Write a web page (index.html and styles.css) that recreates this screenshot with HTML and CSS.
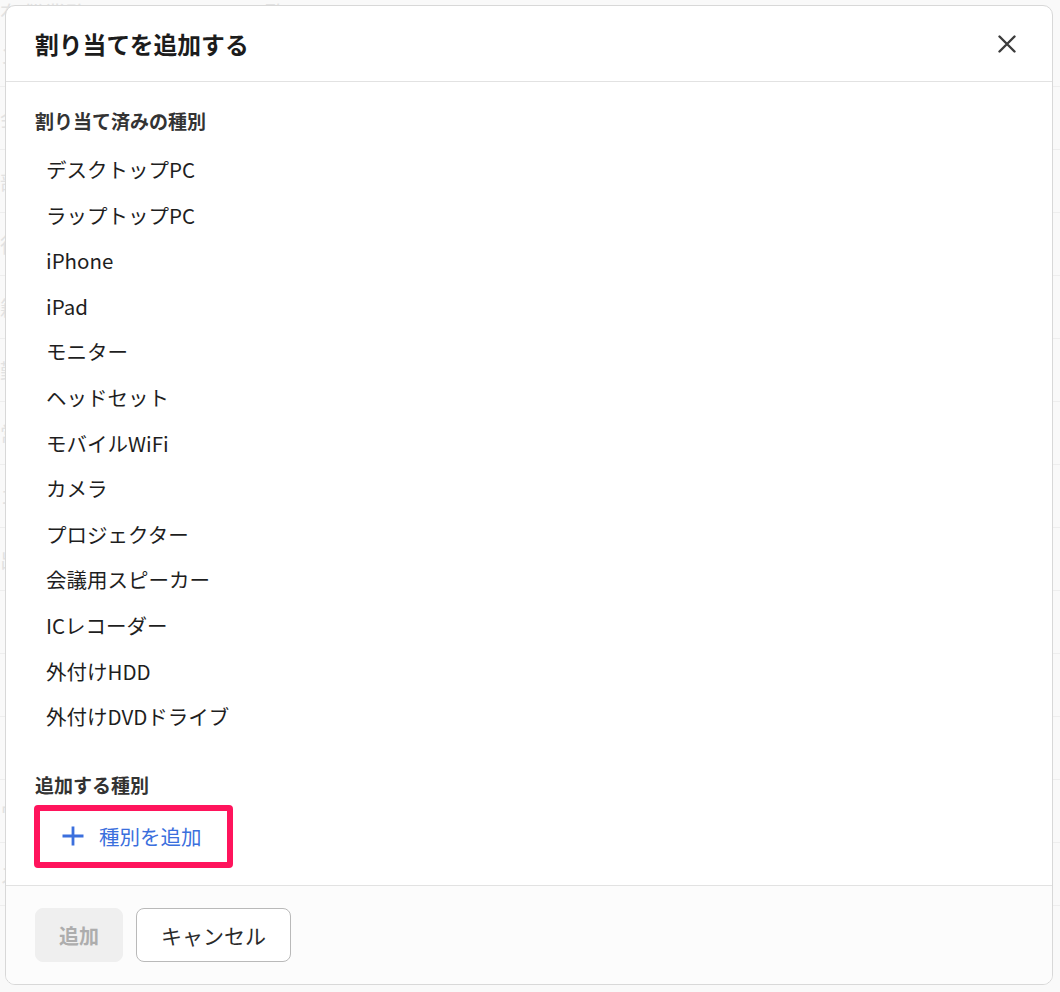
FILE: index.html
```html
<!DOCTYPE html>
<html lang="ja">
<head>
<meta charset="utf-8">
<title>割り当てを追加する</title>
<link rel="stylesheet" href="styles.css">
</head>
<body>
<div class="page">
  <div class="page-title">有償業務メールアドレス一覧</div>
  <div class="page-row">ン</div>
  <div class="page-row">会</div>
  <div class="page-row">部</div>
  <div class="page-row">役</div>
  <div class="page-row">籍</div>
  <div class="page-row">勤</div>
  <div class="page-row">常</div>
  <div class="page-row">コ</div>
  <div class="page-row">出</div>
  <div class="page-row">〈</div>
  <div class="page-row">〈</div>
  <div class="page-row">〈</div>
  <div class="page-row">ウ</div>
  <div class="page-row">ス</div>
</div>

<div class="modal" role="dialog" aria-labelledby="modal-title">
  <header class="modal-header">
    <h1 class="modal-title" id="modal-title">割り当てを追加する</h1>
    <button class="close-btn" aria-label="閉じる">
      <svg width="18" height="18" viewBox="0 0 18 18" aria-hidden="true">
        <path d="M1.5 1.5 L16.5 16.5 M16.5 1.5 L1.5 16.5" stroke="#3c3c3c" stroke-width="2.4" stroke-linecap="round" fill="none"/>
      </svg>
    </button>
  </header>

  <div class="modal-body">
    <h2 class="section-label">割り当て済みの種別</h2>
    <ul class="type-list">
      <li>デスクトップPC</li>
      <li>ラップトップPC</li>
      <li>iPhone</li>
      <li>iPad</li>
      <li>モニター</li>
      <li>ヘッドセット</li>
      <li>モバイルWiFi</li>
      <li>カメラ</li>
      <li>プロジェクター</li>
      <li>会議用スピーカー</li>
      <li>ICレコーダー</li>
      <li>外付けHDD</li>
      <li>外付けDVDドライブ</li>
    </ul>

    <h2 class="section-label section-label-add">追加する種別</h2>
    <div class="highlight">
      <button class="add-type-btn">
        <svg class="plus" width="22" height="20" viewBox="0 0 22 20" aria-hidden="true">
          <path d="M11 0.5 V19.5 M0.5 10 H21.5" stroke="#3b6fdd" stroke-width="2.8" fill="none"/>
        </svg>
        <span>種別を追加</span>
      </button>
    </div>
  </div>

  <footer class="modal-footer">
    <button class="btn btn-primary" disabled>追加</button>
    <button class="btn btn-secondary">キャンセル</button>
  </footer>
</div>
</body>
</html>
```

FILE: styles.css
```css
* {
  box-sizing: border-box;
}

html, body {
  margin: 0;
  padding: 0;
}

body {
  width: 1060px;
  height: 992px;
  overflow: hidden;
  background: #f9f9f9;
  font-family: "Noto Sans CJK JP", "Noto Sans", sans-serif;
  color: #222;
  position: relative;
}

/* faint page behind the dialog */
.page {
  color: #e2e2e2;
  font-size: 20px;
}

.page-title {
  line-height: 24px;
  height: 24px;
  font-size: 22px;
  white-space: nowrap;
}

.page-row {
  height: 63px;
  line-height: 63px;
  border-bottom: 1px solid #eeeeee;
}

/* dialog */
.modal {
  position: absolute;
  left: 5px;
  top: 5px;
  width: 1048px;
  height: 980px;
  background: #ffffff;
  border: 1px solid #d8d8d8;
  border-radius: 10px;
  display: flex;
  flex-direction: column;
  overflow: hidden;
}

.modal-header {
  height: 76px;
  flex: none;
  display: flex;
  align-items: center;
  justify-content: space-between;
  padding: 0 36px 0 29px;
  border-bottom: 1px solid #e2e2e2;
}

.modal-title {
  margin: 0;
  font-size: 23.8px;
  font-weight: 700;
  color: #1c1c1c;
  line-height: 32px;
}

.close-btn {
  border: none;
  background: transparent;
  padding: 0;
  width: 18px;
  height: 18px;
  display: flex;
  cursor: pointer;
}

.modal-body {
  flex: 1;
  padding: 27px 29px 0 29px;
  display: flex;
  flex-direction: column;
  align-items: flex-start;
}

.section-label {
  margin: 0;
  font-size: 19px;
  font-weight: 700;
  color: #333;
  line-height: 24px;
}

.type-list {
  list-style: none;
  margin: 14px 0 0 0;
  padding: 0 0 0 11px;
}

.type-list li {
  font-size: 20.5px;
  line-height: 45.6px;
  height: 45.6px;
  color: #1e1e1e;
}

.section-label-add {
  margin-top: 33px;
}

.highlight {
  margin-top: 8px;
  margin-left: -1px;
  border: 6px solid #ff145c;
  border-radius: 4px;
  width: 199px;
  height: 63px;
  display: flex;
  align-items: center;
}

.add-type-btn {
  border: none;
  background: transparent;
  font-family: inherit;
  font-size: 20.5px;
  color: #3b6fdd;
  display: flex;
  align-items: center;
  gap: 15px;
  padding: 0 0 0 22px;
  white-space: nowrap;
  cursor: pointer;
}

.plus {
  flex: none;
}

.modal-footer {
  flex: none;
  height: 99px;
  border-top: 1px solid #e2e2e2;
  background: #fcfcfc;
  display: flex;
  align-items: center;
  gap: 13px;
  padding: 0 29px 0 29px;
}

.btn {
  height: 54px;
  border-radius: 8px;
  font-family: inherit;
  font-size: 20px;
  padding: 0 23px;
  display: flex;
  align-items: center;
  justify-content: center;
  white-space: nowrap;
}

.btn-primary {
  background: #efefef;
  border: 1px solid #efefef;
  color: #adadad;
  font-weight: 700;
}

.btn-secondary {
  background: #ffffff;
  border: 1px solid #b9b9b9;
  color: #2a2a2a;
  font-size: 21px;
  padding: 0 24px;
  cursor: pointer;
}
```
